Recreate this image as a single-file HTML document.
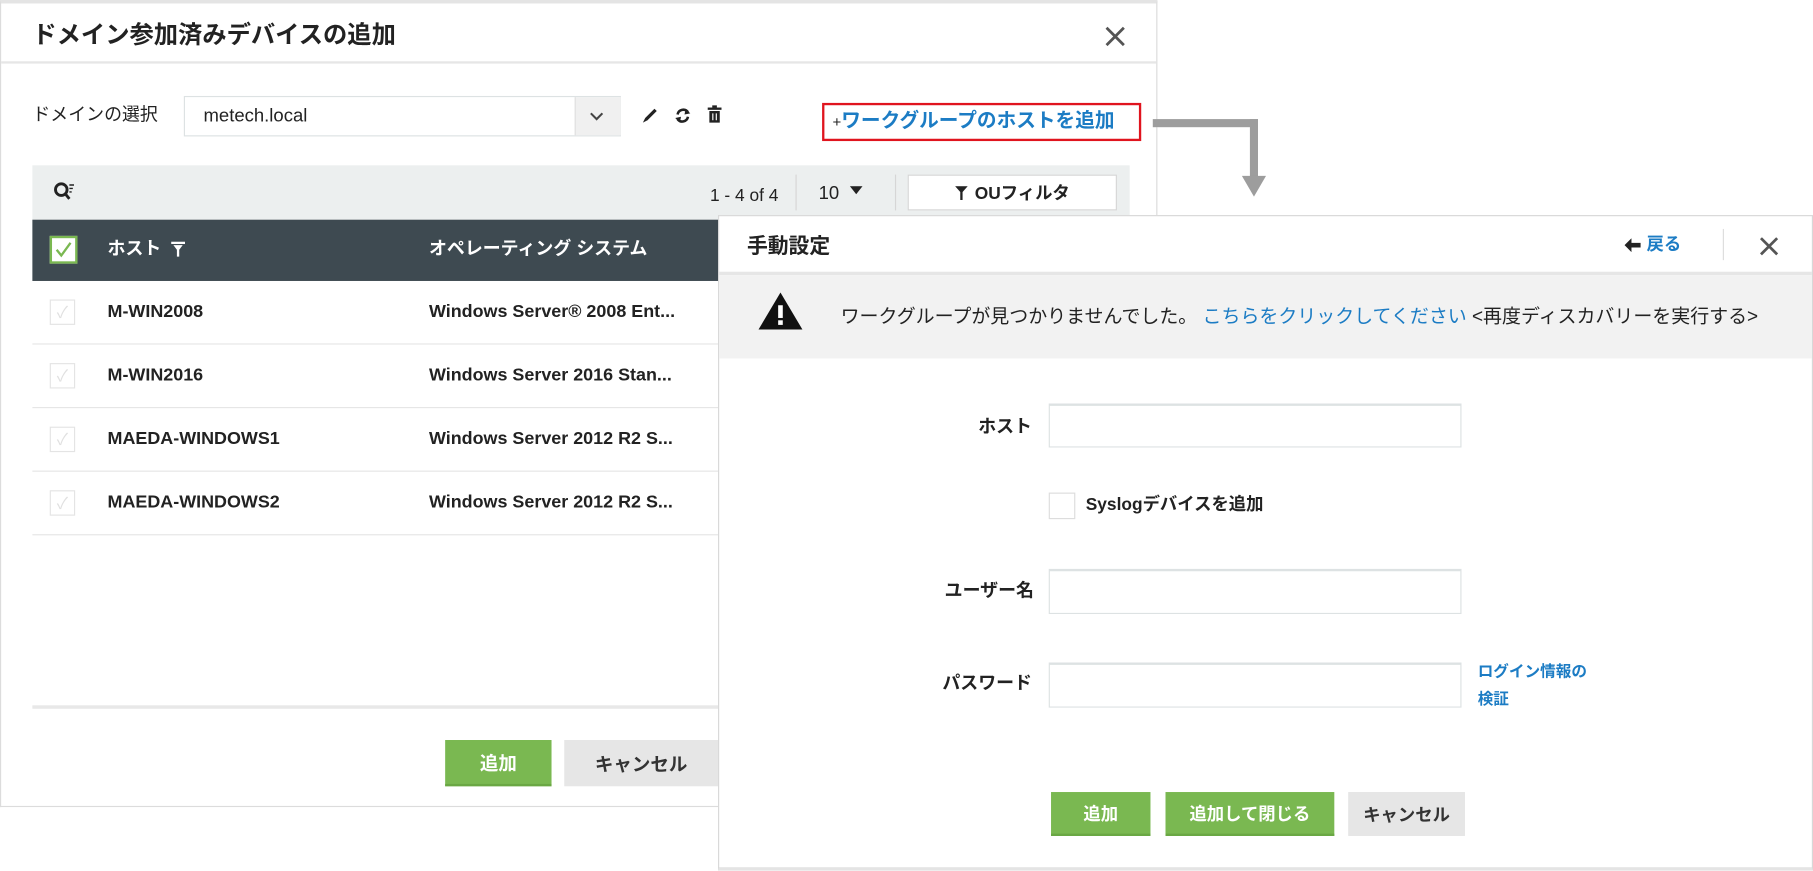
<!DOCTYPE html>
<html><head><meta charset="utf-8"><style>
html,body{margin:0;padding:0;background:#fff;overflow:hidden;width:1813px;height:871px}
#w{position:absolute;left:0;top:0;width:1568px;height:753px;transform:scale(1.15625);transform-origin:0 0;font-family:"Liberation Sans","Noto Sans CJK JP",sans-serif;color:#222}
.a{position:absolute}
.t{position:absolute;white-space:nowrap;font-size:14px;line-height:1}
.b{font-weight:bold}
.blue{color:#1c7cc4}
.btn{position:absolute;display:flex;align-items:center;justify-content:center;font-size:15px;font-weight:bold}
.g{background:#7ab851;color:#fff;border-bottom:2px solid #6aa744;box-sizing:border-box}
.gr{background:#e6e6e6;color:#333}
.inp{position:absolute;border:1px solid #dde2e3;background:#fff;box-sizing:border-box;border-top-width:2px}
.row{position:absolute;left:28px;width:594px;height:55px;border-bottom:1px solid #e6e6e6;box-sizing:border-box}
.row .t{font-size:15.5px}
.cb{position:absolute;left:15px;top:16px;width:22px;height:22px;border:1px solid #e4e4e4;box-sizing:border-box;color:#e0e0e0;font-size:14px;text-align:center;line-height:20px}
</style></head><body><div id="w">

<div class="a" style="left:0;top:0;width:1001px;height:698px;border:1px solid #dcdcdc;border-top:3px solid #e4e4e4;box-sizing:border-box;background:#fff"></div>
<div class="t b" style="left:28px;top:20px;font-size:21px">ドメイン参加済みデバイスの追加</div>
<svg class="a" style="left:955px;top:22px" width="19" height="19"><path d="M2 2L17 17M17 2L2 17" stroke="#555" stroke-width="2.4"/></svg>
<div class="a" style="left:1px;top:53px;width:999px;height:2px;background:#e6e6e6"></div>

<div class="t" style="left:28px;top:92px;font-size:15.5px">ドメインの選択</div>
<div class="inp" style="left:159px;top:83px;width:378px;height:35px;border-top-width:1px"></div>
<div class="t" style="left:176px;top:93px;font-size:16px">metech.local</div>
<div class="a" style="left:497px;top:84px;width:39px;height:33px;background:#f0f0f0;border-left:1px solid #e0e0e0"></div>
<svg class="a" style="left:510px;top:97px" width="12" height="8"><path d="M1 1L6 6L11 1" stroke="#444" stroke-width="1.8" fill="none"/></svg>
<svg class="a" style="left:554px;top:92px" width="16" height="16"><path d="M2 14L4 10L12 2L14 4L6 12Z" fill="#222"/></svg>
<svg class="a" style="left:583px;top:92px" width="15" height="16"><path d="M3 7A5 5 0 0 1 12 5M12 9A5 5 0 0 1 3 11" stroke="#222" stroke-width="2.2" fill="none"/><path d="M10 2L14 6L9 7Z M5 14L1 10L6 9Z" fill="#222"/></svg>
<svg class="a" style="left:612px;top:91px" width="12" height="16"><rect x="0" y="2" width="12" height="2" fill="#222"/><rect x="4" y="0" width="4" height="2" fill="#222"/><path d="M1.5 5H10.5V15H1.5Z M4 7V13H5V7Z M7 7V13H8V7Z" fill="#222" fill-rule="evenodd"/></svg>

<div class="a" style="left:711px;top:89px;width:276px;height:33px;border:2px solid #e0141e;box-sizing:border-box"></div>
<div class="t" style="left:720px;top:96px;font-size:17px"><span style="font-size:13px">+</span><span class="blue b">ワークグループのホストを追加</span></div>

<div class="a" style="left:997px;top:103px;width:91px;height:7px;background:#9d9d9d"></div>
<div class="a" style="left:1081px;top:103px;width:7px;height:52px;background:#9d9d9d"></div>
<svg class="a" style="left:1074px;top:152px" width="21" height="18"><path d="M0 0H21L10.5 18Z" fill="#9d9d9d"/></svg>

<div class="a" style="left:28px;top:143px;width:949px;height:47px;background:#ecefef"></div>
<svg class="a" style="left:46px;top:157px" width="20" height="18"><circle cx="7" cy="7" r="5" stroke="#222" stroke-width="2.5" fill="none"/><path d="M10 10L14 15" stroke="#222" stroke-width="2.5"/><path d="M14 3h4M14 6h3M14 9h2" stroke="#222" stroke-width="1.2"/></svg>
<div class="t" style="left:614px;top:162px;font-size:15px">1 - 4 of 4</div>
<div class="a" style="left:688px;top:151px;width:1px;height:31px;background:#d6d6d6"></div>
<div class="t" style="left:708px;top:160px;font-size:16px">10</div>
<svg class="a" style="left:735px;top:161px" width="11" height="7"><path d="M0 0H11L5.5 7Z" fill="#222"/></svg>
<div class="a" style="left:774px;top:151px;width:1px;height:31px;background:#d6d6d6"></div>
<div class="a" style="left:785px;top:151px;width:181px;height:31px;background:#fff;border:1px solid #d6d6d6;box-sizing:border-box"></div>
<svg class="a" style="left:826px;top:161px" width="11" height="12"><path d="M0 0H11L6.5 5V12H4.5V5Z" fill="#222"/></svg>
<div class="t b" style="left:843px;top:160px;font-size:15px">OUフィルタ</div>

<div class="a" style="left:28px;top:190px;width:594px;height:53px;background:#3e4a51"></div>
<div class="a" style="left:43px;top:204px;width:24px;height:24px;background:#fff;border:2px solid #7ab851;box-sizing:border-box"></div>
<svg class="a" style="left:47px;top:209px" width="16" height="14"><path d="M2 7L6 12L14 1" stroke="#7ab851" stroke-width="2" fill="none"/></svg>
<div class="t b" style="left:93px;top:208px;color:#fff;font-size:15.5px">ホスト</div>
<svg class="a" style="left:148px;top:209px" width="12" height="13"><path d="M0 0H12V2H0Z M2 3H10L7 7V13H5V7Z" fill="#fff"/></svg>
<div class="t b" style="left:371px;top:208px;color:#fff;font-size:15.5px">オペレーティング システム</div>

<div class="row" style="top:243px"><div class="cb">✓</div><div class="t b" style="left:65px;top:19px">M-WIN2008</div><div class="t b" style="left:343px;top:19px">Windows Server® 2008 Ent...</div></div>
<div class="row" style="top:298px"><div class="cb">✓</div><div class="t b" style="left:65px;top:19px">M-WIN2016</div><div class="t b" style="left:343px;top:19px">Windows Server 2016 Stan...</div></div>
<div class="row" style="top:353px"><div class="cb">✓</div><div class="t b" style="left:65px;top:19px">MAEDA-WINDOWS1</div><div class="t b" style="left:343px;top:19px">Windows Server 2012 R2 S...</div></div>
<div class="row" style="top:408px"><div class="cb">✓</div><div class="t b" style="left:65px;top:19px">MAEDA-WINDOWS2</div><div class="t b" style="left:343px;top:19px">Windows Server 2012 R2 S...</div></div>

<div class="a" style="left:28px;top:610px;width:594px;height:3px;background:#e8e8e8"></div>
<div class="btn g" style="left:385px;top:640px;width:92px;height:40px;font-size:16px">追加</div>
<div class="btn gr" style="left:488px;top:640px;width:133px;height:40px;font-size:16px">キャンセル</div>

<div class="a" style="left:621px;top:186px;width:947px;height:567px;background:#fff;border:1px solid #d8d8d8;border-bottom:3px solid #e4e4e4;box-sizing:border-box"></div>
<div class="t b" style="left:646px;top:204px;font-size:18px">手動設定</div>
<svg class="a" style="left:1405px;top:206px" width="14" height="12"><path d="M0 6L6 0V4H14V8H6V12Z" fill="#222"/></svg>
<div class="t b blue" style="left:1424px;top:204px;font-size:15px">戻る</div>
<div class="a" style="left:1490px;top:198px;width:1px;height:27px;background:#ddd"></div>
<svg class="a" style="left:1521px;top:204px" width="18" height="18"><path d="M2 2L16 16M16 2L2 16" stroke="#555" stroke-width="2.4"/></svg>
<div class="a" style="left:622px;top:235px;width:945px;height:3px;background:#e6e6e6"></div>
<div class="a" style="left:622px;top:238px;width:945px;height:72px;background:#f2f2f2"></div>
<svg class="a" style="left:656px;top:253px" width="38" height="32"><path d="M19 0L38 32H0Z" fill="#111"/><rect x="17" y="11" width="4" height="11" fill="#fff"/><rect x="17" y="24" width="4" height="4" fill="#fff"/></svg>
<div class="t" style="left:727px;top:266px;font-size:16.4px">ワークグループが見つかりませんでした。 <span class="blue">こちらをクリックしてください</span> &lt;再度ディスカバリーを実行する&gt;</div>

<div class="t b" style="left:846px;top:362px;font-size:15.5px">ホスト</div>
<div class="inp" style="left:907px;top:349px;width:357px;height:38px"></div>
<div class="a" style="left:907px;top:426px;width:23px;height:23px;border:1px solid #ddd;box-sizing:border-box"></div>
<div class="t b" style="left:939px;top:429px;font-size:15px">Syslogデバイスを追加</div>

<div class="t b" style="left:817px;top:504px;font-size:15.5px">ユーザー名</div>
<div class="inp" style="left:907px;top:492px;width:357px;height:39px"></div>
<div class="t b" style="left:815px;top:584px;font-size:15.5px">パスワード</div>
<div class="inp" style="left:907px;top:573px;width:357px;height:39px"></div>
<div class="t b blue" style="left:1278px;top:574px;font-size:13.5px">ログイン情報の</div>
<div class="t b blue" style="left:1278px;top:598px;font-size:13.5px">検証</div>

<div class="btn g" style="left:909px;top:685px;width:86px;height:38px">追加</div>
<div class="btn g" style="left:1008px;top:685px;width:146px;height:38px">追加して閉じる</div>
<div class="btn gr" style="left:1166px;top:685px;width:101px;height:38px">キャンセル</div>

</div></body></html>
